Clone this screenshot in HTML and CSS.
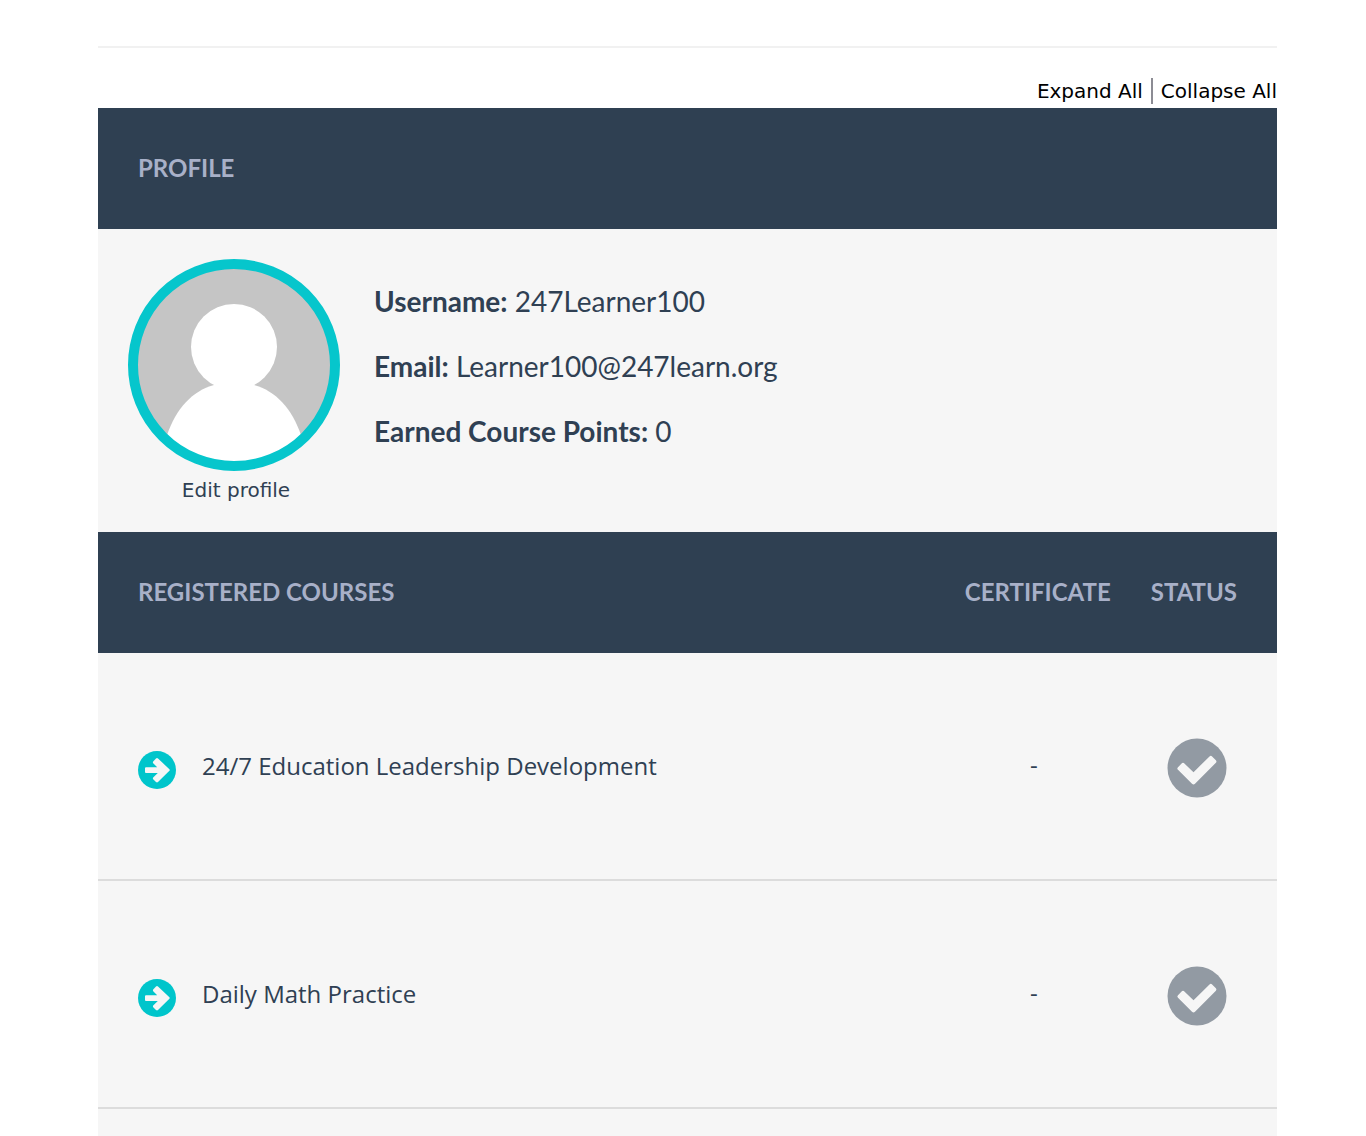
FILE: index.html
```html
<!DOCTYPE html>
<html lang="en">
<head>
    <meta charset="UTF-8">
    <meta name="viewport" content="width=device-width, initial-scale=1.0">
    <title>Profile</title>
    <link rel="stylesheet" href="styles.css">
</head>
<body>
    <div class="container">
        <div class="toggle-all">
            <a href="#">Expand All</a>
            <span class="divider"></span>
            <a href="#">Collapse All</a>
        </div>

        <h2 class="heading">PROFILE</h2>
        <div class="profile">
            <div class="profile-avatar">
                <svg class="avatar" viewBox="0 0 212 212" role="img" aria-label="Avatar">
                    <defs>
                        <clipPath id="avatar-clip"><circle cx="106" cy="106" r="97"/></clipPath>
                    </defs>
                    <circle cx="106" cy="106" r="101" fill="#c5c5c5"/>
                    <g clip-path="url(#avatar-clip)" fill="#fff">
                        <circle cx="106" cy="88" r="43"/>
                        <path d="M86 126C64 132 48 150 39 176V212H173V176C164 150 148 132 126 126Z"/>
                    </g>
                    <circle cx="106" cy="106" r="101" fill="none" stroke="#06c6cc" stroke-width="10"/>
                </svg>
                <a href="#">Edit profile</a>
            </div>
            <div class="profile-info">
                <p><b>Username:</b> 247Learner100</p>
                <p><b>Email:</b> Learner100@247learn.org</p>
                <p><b>Earned Course Points:</b> 0</p>
            </div>
        </div>

        <div class="courses">
            <table>
                <thead>
                    <tr>
                        <th class="course">REGISTERED COURSES</th>
                        <th class="certificate">CERTIFICATE</th>
                        <th class="status">STATUS</th>
                    </tr>
                </thead>
                <tbody>
                    <tr>
                        <td class="course">
                            <a href="#">
                                <svg class="arrow" viewBox="0 0 38 38" aria-hidden="true">
                                    <circle cx="19" cy="19" r="19" fill="#00c5cb"/>
                                    <path d="M8 16.2H19.2L15.2 12.2Q14.6 11.4 15.2 10.6L18 7.5Q19 6.6 20 7.5L31.4 18.2Q32.2 19 31.4 19.8L20 31Q19 31.8 18 31L15.2 28.2Q14.6 27.4 15.2 26.6L19.8 22H8Q7 22 7 21V17.2Q7 16.2 8 16.2Z" fill="#f6f6f6"/>
                                </svg>
                                <span>24/7 Education Leadership Development</span>
                            </a>
                        </td>
                        <td class="certificate">-</td>
                        <td class="status">
                            <svg class="check" viewBox="0 0 60 60" role="img" aria-label="Not completed">
                                <circle cx="30" cy="30" r="29.5" fill="#929aa3"/>
                                <path d="M11 29.2L14.6 25.4Q16 24 17.4 25.4L26.5 34.2L42.5 18.4Q43.8 17.2 45.1 18.4L48.9 22.2Q50 23.5 48.9 24.8L28 45.8Q26.5 47 25 45.8L11 31.8Q9.6 30.5 11 29.2Z" fill="#f6f6f6"/>
                            </svg>
                        </td>
                    </tr>
                    <tr>
                        <td class="course">
                            <a href="#">
                                <svg class="arrow" viewBox="0 0 38 38" aria-hidden="true">
                                    <circle cx="19" cy="19" r="19" fill="#00c5cb"/>
                                    <path d="M8 16.2H19.2L15.2 12.2Q14.6 11.4 15.2 10.6L18 7.5Q19 6.6 20 7.5L31.4 18.2Q32.2 19 31.4 19.8L20 31Q19 31.8 18 31L15.2 28.2Q14.6 27.4 15.2 26.6L19.8 22H8Q7 22 7 21V17.2Q7 16.2 8 16.2Z" fill="#f6f6f6"/>
                                </svg>
                                <span>Daily Math Practice</span>
                            </a>
                        </td>
                        <td class="certificate">-</td>
                        <td class="status">
                            <svg class="check" viewBox="0 0 60 60" role="img" aria-label="Not completed">
                                <circle cx="30" cy="30" r="29.5" fill="#929aa3"/>
                                <path d="M11 29.2L14.6 25.4Q16 24 17.4 25.4L26.5 34.2L42.5 18.4Q43.8 17.2 45.1 18.4L48.9 22.2Q50 23.5 48.9 24.8L28 45.8Q26.5 47 25 45.8L11 31.8Q9.6 30.5 11 29.2Z" fill="#f6f6f6"/>
                            </svg>
                        </td>
                    </tr>
                </tbody>
            </table>
        </div>
    </div>
</body>
</html>
```
FILE: styles.css
```css
* {
    box-sizing: border-box;
}
body {
    display: flex;
    min-height: 100vh;
    margin: 0;
    padding: 46px 89px 0 98px;
    background-color: #fff;
    color: #2f4053;
    font-family: Verdana, "DejaVu Sans", sans-serif;
    font-size: 20px;
}
a {
    color: inherit;
    text-decoration: none;
}
.container {
    display: flex;
    flex: 1;
    flex-direction: column;
    border-top: 2px solid #f1f1f1;
}
.toggle-all {
    display: flex;
    justify-content: flex-end;
    align-items: center;
    gap: 8px;
    height: 60px;
    padding-top: 26px;
    color: #000;
}
.divider {
    width: 2px;
    height: 26px;
    background-color: #8c8c94;
}
.heading,
th {
    height: 121px;
    padding: 0 40px 2px;
    background-color: #2f4052;
    color: #a8b0c8;
    font-family: Lato, sans-serif;
    font-size: 24px;
    font-weight: bold;
    line-height: 119px;
    text-align: left;
}
.heading {
    margin: 0;
}
.profile {
    display: flex;
    gap: 34px;
    padding: 30px 30px 26px;
    background-color: #f6f6f6;
}
.profile-avatar {
    display: flex;
    flex-direction: column;
    align-items: center;
}
.profile-avatar a {
    padding: 4px 0 0 4px;
    line-height: 31px;
}
.avatar {
    width: 212px;
    height: 212px;
}
.profile-info {
    padding-top: 10px;
    font-family: Lato, sans-serif;
    font-size: 28px;
    line-height: 65px;
}
.profile-info p {
    margin: 0;
}
.courses {
    flex: 1;
    background-color: #f6f6f6;
}
table {
    width: 100%;
    border-collapse: separate;
    border-spacing: 0;
}
td {
    height: 228px;
    padding: 0 40px 2px;
    border-bottom: 2px solid #dcdcdc;
    font-family: "Open Sans", sans-serif;
    font-size: 24px;
}
.course {
    width: 100%;
}
.course a {
    display: flex;
    align-items: center;
    gap: 26px;
}
th.certificate,
th.status {
    padding-left: 20px;
}
th.certificate {
    padding-right: 20px;
}
td.certificate {
    padding: 0 28px 4px 20px;
    text-align: center;
}
td.status {
    padding: 0 34px 0 20px;
    text-align: center;
}
.arrow {
    flex: none;
    width: 38px;
    height: 38px;
    margin-top: 10px;
}
.check {
    display: block;
    width: 60px;
    height: 60px;
    margin: 4px auto 0;
}
```
